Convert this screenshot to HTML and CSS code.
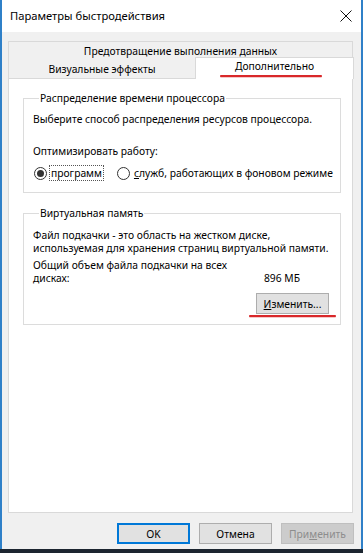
FILE: index.html
```html
<!DOCTYPE html>
<html lang="ru">
<head>
<meta charset="utf-8">
<title>Параметры быстродействия</title>
<link rel="stylesheet" href="styles.css">
</head>
<body>
<div class="window">
  <div class="titlebar">
    <span class="title">Параметры быстродействия</span>
    <svg class="close" width="12" height="12" viewBox="0 0 12 12"><path d="M0.5 0.5 L11.5 11.5 M11.5 0.5 L0.5 11.5" stroke="#111" stroke-width="1" fill="none"/></svg>
  </div>
  <div class="client">
    <div class="tabs">
      <div class="tabrow row-top">
        <div class="tab tab-full">Предотвращение выполнения данных</div>
      </div>
      <div class="tabrow row-bottom">
        <div class="tab tab-left">Визуальные эффекты</div>
        <div class="tab tab-sel">Дополнительно<span class="redmark mark-tab"></span></div>
      </div>
    </div>
    <div class="panel">
      <fieldset class="group group-cpu">
        <legend>Распределение времени процессора</legend>
        <div class="line">Выберите способ распределения ресурсов процессора.</div>
        <div class="line opt">Оптимизировать работу:</div>
        <div class="radios">
          <span class="radio checked"></span><span class="rlabel focus">программ</span>
          <span class="radio second"></span><span class="rlabel"><u>с</u>лужб, работающих в фоновом режиме</span>
        </div>
      </fieldset>
      <fieldset class="group group-vm">
        <legend>Виртуальная память</legend>
        <div class="line">Файл подкачки - это область на жестком диске,</div>
        <div class="line">используемая для хранения страниц виртуальной памяти.</div>
        <div class="line total">Общий объем файла подкачки на всех</div>
        <div class="line size-row"><span>дисках:</span><span class="size">896 МБ</span></div>
        <div class="btn-row">
          <button class="btn change"><u>И</u>зменить...</button>
          <span class="redmark mark-btn"></span>
        </div>
      </fieldset>
    </div>
    <div class="buttons">
      <button class="btn default">OK</button>
      <button class="btn">Отмена</button>
      <button class="btn disabled">При<u>м</u>енить</button>
    </div>
  </div>
</div>
<div class="taskbar"></div>
</body>
</html>
```
FILE: styles.css
```css
html, body {
  margin: 0;
  padding: 0;
}
body {
  width: 363px;
  height: 553px;
  background: #f0f0f0;
  font-family: "Noto Sans", "Open Sans", sans-serif;
  font-size: 10.3px;
  color: #000;
  overflow: hidden;
}
.window {
  box-sizing: border-box;
  width: 363px;
  height: 549px;
  border-left: 2px solid #2f80c8;
  border-right: 2px solid #2f80c8;
  display: flex;
  flex-direction: column;
  background: #f0f0f0;
}
.titlebar {
  height: 32px;
  background: #fff;
  display: flex;
  align-items: center;
  justify-content: space-between;
  padding: 0 9px 0 8px;
  flex: none;
}
.title {
  font-size: 11.2px;
  line-height: 16px;
  white-space: nowrap;
}
.close {
  display: block;
  margin-top: -1px;
}
.client {
  flex: 1;
  display: flex;
  flex-direction: column;
  padding: 9px 7px 0 6px;
}
.tabs {
  display: flex;
  flex-direction: column;
  width: 345px;
}
.tabrow {
  display: flex;
}
.tab {
  box-sizing: border-box;
  text-align: center;
  border: 1px solid #d9d9d9;
  border-bottom: none;
  background: #f0f0f0;
  line-height: 14px;
  white-space: nowrap;
}
.tab-full {
  width: 345px;
  height: 19px;
  padding-top: 2px;
}
.row-bottom {
  height: 18px;
  position: relative;
}
.tab-left {
  width: 188px;
  height: 18px;
  border-top: none;
  padding-top: 2px;
}
.tab-sel {
  position: relative;
  width: 159px;
  height: 22px;
  margin-top: -3px;
  margin-bottom: -1px;
  margin-left: -1px;
  margin-right: -1px;
  background: #fff;
  padding-top: 1px;
  z-index: 2;
}
.redmark {
  position: absolute;
  display: block;
  height: 2px;
  background: #d9282a;
  border-radius: 2px;
  box-shadow: 0 0.5px 0.5px rgba(217, 40, 42, 0.5);
}
.mark-tab {
  left: 24px;
  width: 102px;
  top: 17px;
}
.panel {
  box-sizing: border-box;
  width: 345px;
  height: 435px;
  background: #fff;
  border: 1px solid #d9d9d9;
  padding: 12px 11px 0 14px;
  display: flex;
  flex-direction: column;
  gap: 13px;
}
.group {
  margin: 0;
  border: 1px solid #dcdcdc;
  padding: 0 10px 0 9px;
  min-width: 0;
}
.group legend {
  padding: 0 1px;
  margin-left: 6px;
  line-height: 14px;
  white-space: nowrap;
}
.line {
  line-height: 14px;
  white-space: nowrap;
}
.group-cpu {
  padding-top: 7px;
  padding-bottom: 12px;
}
.opt {
  margin-top: 18px;
}
.radios {
  margin-top: 8px;
  height: 14px;
  display: flex;
  align-items: center;
  line-height: 14px;
  white-space: nowrap;
}
.radio {
  box-sizing: border-box;
  width: 13px;
  height: 13px;
  border: 1px solid #333;
  border-radius: 50%;
  background: #fff;
  display: flex;
  align-items: center;
  justify-content: center;
  margin-left: 1px;
  flex: none;
}
.radio.checked::after {
  content: "";
  width: 7px;
  height: 7px;
  border-radius: 50%;
  background: #333;
}
.radio.second {
  margin-left: 13px;
}
.rlabel {
  margin-left: 2px;
  padding: 0 1px;
  border: 1px dotted transparent;
}
.rlabel u {
  text-decoration: underline;
}
.rlabel.focus {
  border-color: #555;
}
.group-vm {
  padding-top: 9px;
  padding-bottom: 10px;
  line-height: 13px;
}
.group-vm .line {
  line-height: 13px;
}
.total {
  margin-top: 4px;
}
.size-row {
  display: flex;
  justify-content: space-between;
  padding-right: 30px;
}
.btn-row {
  position: relative;
  margin-top: 8px;
  display: flex;
  justify-content: flex-end;
  padding-right: 1px;
}
.btn {
  box-sizing: border-box;
  width: 73px;
  height: 21px;
  background: #e1e1e1;
  border: 1px solid #adadad;
  font-family: inherit;
  font-size: 10.3px;
  color: #000;
  padding: 0;
  line-height: 14px;
  white-space: nowrap;
}
.btn u {
  text-decoration: underline;
}
.mark-btn {
  right: -6px;
  width: 87px;
  top: 22px;
}
.buttons {
  margin-top: 10px;
  display: flex;
  justify-content: flex-end;
  gap: 9px;
  width: 346px;
}
.btn.default {
  border-color: #0078d7;
  box-shadow: inset 0 0 0 1px #0078d7;
}
.btn.disabled {
  background: #cccccc;
  border-color: #bfbfbf;
  color: #8d8d8d;
}
.taskbar {
  height: 4px;
  background: #1c2530;
}
```
